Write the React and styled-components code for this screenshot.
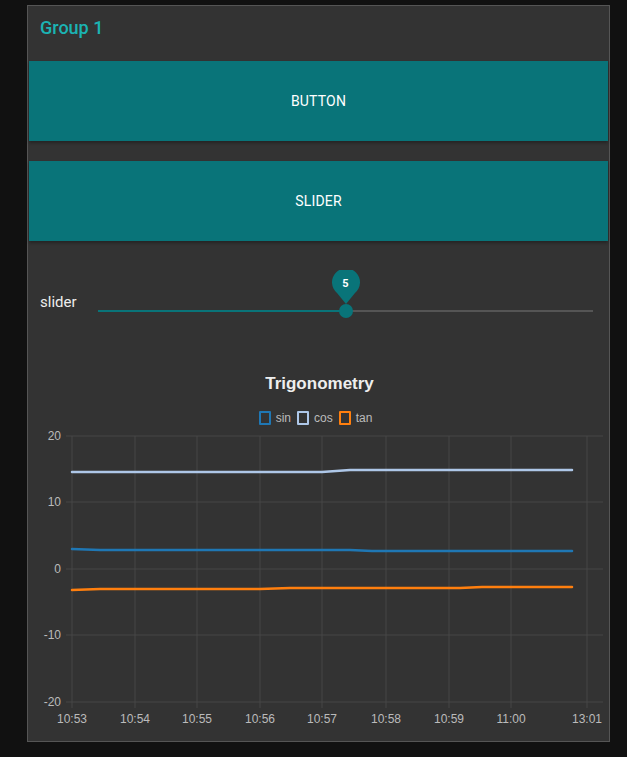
import React from 'react'
import styled, { createGlobalStyle } from 'styled-components'

const GlobalStyle = createGlobalStyle`
  html, body {
    margin: 0;
    padding: 0;
    background: #111111;
  }
  body {
    font-family: Roboto, "Liberation Sans", sans-serif;
  }
`

const Page = styled.div`
  padding: 5px 0 0 27px;
  height: 752px;
  box-sizing: border-box;
`

const Panel = styled.div`
  width: 583px;
  height: 737px;
  box-sizing: border-box;
  border: 1px solid #555;
  background: #333333;
  display: flex;
  flex-direction: column;
`

const GroupTitle = styled.div`
  height: 55px;
  box-sizing: border-box;
  padding: 11px 0 0 12px;
  font-size: 18px;
  font-weight: 500;
  color: #1bb3b3;
`

const Buttons = styled.div`
  display: flex;
  flex-direction: column;
  gap: 20px;
  padding: 0 1px;
`

const Button = styled.button`
  height: 80px;
  width: 100%;
  border: none;
  background: #097479;
  color: #fff;
  font-family: Roboto, "Liberation Sans", sans-serif;
  font-size: 14px;
  font-weight: 400;
  letter-spacing: 0.2px;
  text-transform: uppercase;
  box-shadow: 0 2px 3px rgba(0, 0, 0, 0.3);
`

const SliderRow = styled.div`
  display: flex;
  align-items: center;
  height: 60px;
  margin-top: 40px;
  padding: 0 16px 0 12px;
`

const SliderLabel = styled.div`
  width: 58px;
  font-size: 15px;
  color: #eee;
  margin-top: -18px;
`

const Track = styled.div`
  position: relative;
  flex: 1;
  height: 2px;
  background: #555;
`

const Fill = styled.div`
  height: 100%;
  background: #097479;
`

const Thumb = styled.div`
  position: absolute;
  top: -6px;
  width: 14px;
  height: 14px;
  margin-left: -7px;
  border-radius: 50%;
  background: #097479;
`

const Pin = styled.div`
  position: absolute;
  top: -40px;
  width: 28px;
  height: 34px;
  margin-left: -14px;
  display: flex;
  justify-content: center;
  svg {
    position: absolute;
    top: 0;
    left: 0;
  }
  span {
    position: relative;
    margin-top: 7px;
    font-size: 11px;
    font-weight: 700;
    color: #fff;
  }
`

const ChartBox = styled.div`
  margin-top: 33px;
  display: flex;
  flex-direction: column;
  align-items: center;
  font-family: "Liberation Sans", Arial, sans-serif;
`

const ChartTitle = styled.div`
  font-size: 17px;
  font-weight: 700;
  color: #eee;
  height: 22px;
  margin-left: 2px;
`

const Legend = styled.div`
  display: flex;
  gap: 6px;
  margin-top: 14px;
  height: 16px;
  align-items: center;
  margin-left: -6px;
`

const LegendItem = styled.div`
  display: flex;
  align-items: center;
  gap: 5px;
  font-size: 12px;
  color: #bbb;
`

const LegendBox = styled.span`
  width: 8px;
  height: 10px;
  border: 2px solid ${(p) => p.color};
  border-radius: 1px;
`

const Plot = styled.svg`
  display: block;
  align-self: flex-start;
`

const series = [
  { name: 'sin', color: '#1f77b4', pts: [[72, 548], [100, 549], [350, 549], [372, 550], [572, 550]] },
  { name: 'cos', color: '#aec7e8', pts: [[72, 471], [322, 471], [350, 469], [572, 469]] },
  { name: 'tan', color: '#ff7f0e', pts: [[72, 589], [100, 588], [260, 588], [290, 587], [460, 587], [482, 586], [572, 586]] },
]

const yTicks = [
  { v: '20', y: 435 },
  { v: '10', y: 501 },
  { v: '0', y: 568 },
  { v: '-10', y: 634 },
  { v: '-20', y: 701 },
]

const xTicks = [
  { t: '10:53', x: 72 },
  { t: '10:54', x: 135 },
  { t: '10:55', x: 197 },
  { t: '10:56', x: 260 },
  { t: '10:57', x: 322 },
  { t: '10:58', x: 386 },
  { t: '10:59', x: 449 },
  { t: '11:00', x: 511 },
  { t: '13:01', x: 587 },
]

// plot coordinates are taken as page pixels, shifted by the svg origin
const OX = 28
const OY = 425

const Chart = () => (
  <ChartBox>
    <ChartTitle>Trigonometry</ChartTitle>
    <Legend>
      {series.map((s) => (
        <LegendItem key={s.name}>
          <LegendBox color={s.color} />
          {s.name}
        </LegendItem>
      ))}
    </Legend>
    <Plot width="581" height="310">
      <g transform={`translate(${-OX}, ${-OY})`}>
        {yTicks.map((t) => (
          <g key={t.v}>
            <line x1="66" x2="603" y1={t.y} y2={t.y} stroke="#474747" strokeWidth="1" />
            <text x="61" y={t.y + 4} textAnchor="end" fontSize="12" fill="#bbb">
              {t.v}
            </text>
          </g>
        ))}
        {xTicks.map((t) => (
          <g key={t.t}>
            <line x1={t.x} x2={t.x} y1="435" y2="707" stroke="#474747" strokeWidth="1" />
            <text x={t.x} y="722" textAnchor="middle" fontSize="12" fill="#bbb">
              {t.t}
            </text>
          </g>
        ))}
        {series.map((s) => (
          <polyline
            key={s.name}
            points={s.pts.map((p) => p.join(',')).join(' ')}
            fill="none"
            stroke={s.color}
            strokeWidth="2.5"
            strokeLinecap="round"
          />
        ))}
      </g>
    </Plot>
  </ChartBox>
)

const App = () => {
  const value = 5
  const pct = (value / 10) * 100

  return (
    <>
      <GlobalStyle />
      <Page>
        <Panel>
          <GroupTitle>Group 1</GroupTitle>
          <Buttons>
            <Button>Button</Button>
            <Button>Slider</Button>
          </Buttons>
          <SliderRow>
            <SliderLabel>slider</SliderLabel>
            <Track>
              <Fill style={{ width: `${pct}%` }} />
              <Thumb style={{ left: `${pct}%` }} />
              <Pin style={{ left: `${pct}%` }}>
                <svg width="28" height="34" viewBox="0 0 28 34">
                  <path d="M14 34 L5 23 A14 14 0 1 1 23 23 Z" fill="#097479" />
                </svg>
                <span>{value}</span>
              </Pin>
            </Track>
          </SliderRow>
          <Chart />
        </Panel>
      </Page>
    </>
  )
}

export default App
